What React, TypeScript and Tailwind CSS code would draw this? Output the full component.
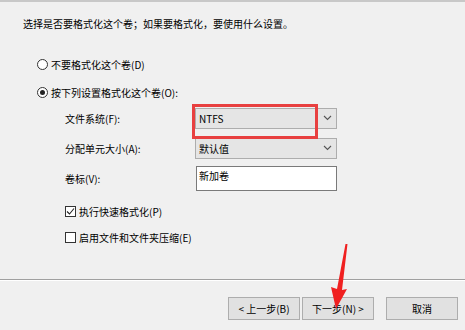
import React from "react";

const font = { fontFamily: '"Noto Sans CJK SC", "Liberation Sans", sans-serif' };

function Chevron() {
  return (
    <svg width="9" height="6" viewBox="0 0 9 6" className="block">
      <path d="M1 1 L4.5 4.5 L8 1" fill="none" stroke="#555" strokeWidth="1.1" />
    </svg>
  );
}

function Select({ value }: { value: string }) {
  return (
    <div className="w-[142px] h-[21px] border border-[#adadad] bg-[#e5e5e5] flex items-center">
      <div className="flex-1 pl-[3px] text-[10px] text-black">{value}</div>
      <div className="w-[18px] flex items-center justify-center"><Chevron /></div>
    </div>
  );
}

function Button({ children }: { children: React.ReactNode }) {
  return (
    <div className="w-[72px] h-[23px] border border-[#adadad] bg-[#e1e1e1] flex items-center justify-center text-[10px] text-black">
      {children}
    </div>
  );
}

export default function App() {
  return (
    <div className="w-[465px] h-[330px] bg-[#f0f0f0] relative overflow-hidden text-black" style={font}>
      <div className="h-[2px] bg-[#c8c8c8]" />
      <div className="pl-[23px] pt-[16px] text-[10px] leading-[12px]">选择是否要格式化这个卷；如果要格式化，要使用什么设置。</div>
      <div className="pl-[37px] pt-[28px] flex flex-col gap-[16px] text-[10px]">
        <div className="flex items-center h-[12px] gap-[3px]">
          <div className="w-[11px] h-[11px] rounded-full border border-[#333] bg-white" />
          <span>不要格式化这个卷(D)</span>
        </div>
        <div className="flex items-center h-[12px] gap-[3px]">
          <div className="w-[11px] h-[11px] rounded-full border border-[#333] bg-white flex items-center justify-center">
            <div className="w-[5px] h-[5px] rounded-full bg-[#222]" />
          </div>
          <span>按下列设置格式化这个卷(O):</span>
        </div>
      </div>
      <div className="pl-[65px] pt-[5px] flex flex-col text-[10px]">
        <div className="grid grid-cols-[130px_142px] items-center h-[30px]">
          <span>文件系统(F):</span>
          <Select value="NTFS" />
        </div>
        <div className="grid grid-cols-[130px_142px] items-center h-[30px]">
          <span>分配单元大小(A):</span>
          <Select value="默认值" />
        </div>
        <div className="grid grid-cols-[131px_141px] items-center h-[30px]">
          <span>卷标(V):</span>
          <div className="h-[25px] border border-[#7a7a7a] bg-white pl-[2px] pt-[3px] text-[10px] leading-[12px]">新加卷</div>
        </div>
        <div className="flex flex-col gap-[15px] pt-[13px]">
          <div className="flex items-center h-[11px] gap-[3px]">
            <div className="w-[11px] h-[11px] border border-[#333] bg-white flex items-center justify-center">
              <svg width="9" height="9" viewBox="0 0 9 9"><path d="M1 4.5 L3.5 7 L8 1.5" fill="none" stroke="#222" strokeWidth="1.1" /></svg>
            </div>
            <span>执行快速格式化(P)</span>
          </div>
          <div className="flex items-center h-[11px] gap-[3px]">
            <div className="w-[11px] h-[11px] border border-[#333] bg-white" />
            <span>启用文件和文件夹压缩(E)</span>
          </div>
        </div>
      </div>
      <div className="absolute left-0 right-0 top-[279px] h-[1px] bg-[#a0a0a0]" />
      <div className="absolute left-0 right-0 top-[280px] h-[1px] bg-white" />
      <div className="absolute left-[228px] top-[297px] flex">
        <Button>&lt; 上一步(B)</Button>
        <div className="w-[2px]" />
        <Button>下一步(N) &gt;</Button>
        <div className="w-[12px]" />
        <Button>取消</Button>
      </div>
      {/* red highlight box */}
      <div className="absolute left-[192px] top-[104px] w-[126px] h-[35px] border-[3px] border-[#e84040]" />
      {/* red arrow */}
      <svg className="absolute left-0 top-0" width="465" height="330" viewBox="0 0 465 330">
        <polygon points="345.5,244 347.5,244 342,290 347,289 336,309 331,287 337,289" fill="#f02020" />
      </svg>
    </div>
  );
}
